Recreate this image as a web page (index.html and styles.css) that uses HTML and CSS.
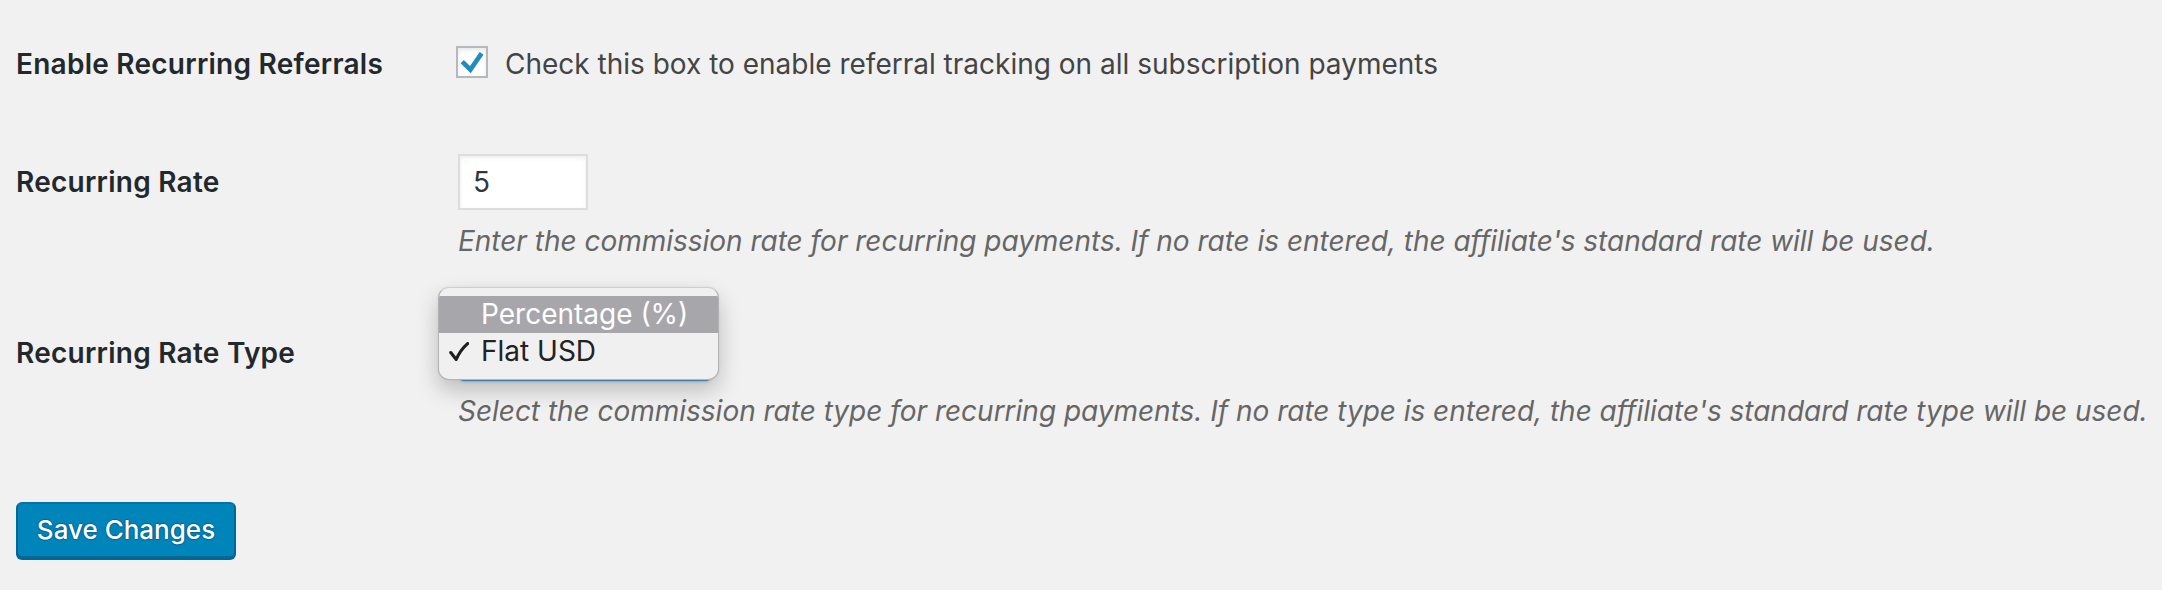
FILE: index.html
```html
<!DOCTYPE html>
<html lang="en">
<head>
<meta charset="utf-8">
<title>Recurring Referrals Settings</title>
<link rel="stylesheet" href="styles.css">
</head>
<body>
<form class="settings">
  <div class="row row-enable">
    <div class="th">Enable Recurring Referrals</div>
    <div class="td">
      <label class="check-label">
        <span class="checkbox">
          <svg class="tick-icon" viewBox="0 0 28 28" width="28" height="28" aria-hidden="true">
            <path d="M4.2 13.6 L12.4 21.6 L23.6 5.4" fill="none" stroke="#1e8cbe" stroke-width="4.6" stroke-linejoin="miter" stroke-linecap="butt"/>
          </svg>
        </span>
        <span class="check-text">Check this box to enable referral tracking on all subscription payments</span>
      </label>
    </div>
  </div>

  <div class="row row-rate">
    <div class="th">Recurring Rate</div>
    <div class="td">
      <div class="text-input">5</div>
      <p class="description">Enter the commission rate for recurring payments. If no rate is entered, the affiliate's standard rate will be used.</p>
    </div>
  </div>

  <div class="row row-type">
    <div class="th">Recurring Rate Type</div>
    <div class="td">
      <div class="select-wrap">
        <div class="select"></div>
        <div class="popup">
          <div class="option highlighted">Percentage (%)</div>
          <div class="option">
            <svg class="mark" viewBox="0 0 20 20" width="20" height="20" aria-hidden="true">
              <path d="M1.8 10.6 L7.2 17.4 C10 11 13.5 6 18.6 1.6" fill="none" stroke="#1f1f1f" stroke-width="3.2" stroke-linejoin="round" stroke-linecap="round"/>
            </svg>Flat USD
          </div>
        </div>
      </div>
      <p class="description">Select the commission rate type for recurring payments. If no rate type is entered, the affiliate's standard rate type will be used.</p>
    </div>
  </div>

  <div class="submit">
    <button type="button" class="button-primary">Save Changes</button>
  </div>
</form>
</body>
</html>
```

FILE: styles.css
```css
html, body {
  margin: 0;
  padding: 0;
  background: #f1f1f1;
}

body {
  font-family: "Inter", "Liberation Sans", sans-serif;
  color: #444;
  width: 2162px;
  height: 590px;
  overflow: hidden;
}

.settings {
  padding: 0 0 0 16px;
}

.row {
  display: grid;
  grid-template-columns: 440px 1fr;
  align-items: start;
}

.th {
  font-size: 28px;
  line-height: 36px;
  font-weight: 600;
  letter-spacing: 0.25px;
  color: #23282d;
}

.row-enable .th { padding-top: 46px; }
.row-enable .td { padding-top: 46px; padding-bottom: 42px; }

.row-rate .th { padding-top: 40px; }
.row-rate .td { padding-top: 30px; padding-bottom: 36px; }

.row-type .th { padding-top: 40px; }
.row-type .td { padding-top: 30px; padding-bottom: 30px; }

.check-label {
  display: flex;
  align-items: flex-start;
  gap: 17px;
}

.checkbox {
  box-sizing: border-box;
  width: 32px;
  height: 32px;
  border: 2px solid #b4b9be;
  background: #fff;
  box-shadow: inset 0 2px 4px rgba(0, 0, 0, 0.1);
  display: flex;
  flex: none;
}

.tick-icon {
  display: block;
}

.check-text {
  font-size: 28px;
  line-height: 36px;
  color: #444;
}

.text-input {
  box-sizing: border-box;
  width: 130px;
  height: 56px;
  margin-left: 2px;
  border: 2px solid #ddd;
  background: #fff;
  box-shadow: inset 0 2px 4px rgba(0, 0, 0, 0.07);
  font-size: 28px;
  line-height: 52px;
  padding-left: 13px;
  color: #32373c;
}

.description {
  margin: 13px 0 0 2px;
  font-size: 28px;
  line-height: 36px;
  font-style: italic;
  letter-spacing: -0.02px;
  white-space: nowrap;
  color: #666;
}

.row-type .description {
  margin-top: 12px;
}

.select-wrap {
  position: relative;
  width: 250px;
  height: 56px;
  margin-left: 4px;
}

.select {
  box-sizing: border-box;
  width: 250px;
  height: 56px;
  border: 2px solid #5b9dd9;
  border-radius: 4px;
  background: #fff;
  box-shadow: 0 0 3px rgba(30, 140, 190, 0.7);
}

.popup {
  position: absolute;
  left: -22px;
  top: -38px;
  box-sizing: border-box;
  width: 281px;
  height: 93px;
  padding-top: 8px;
  border: 1px solid #b3b3b3;
  border-top-color: #cfcfcf;
  border-radius: 11px;
  background: #f0f0f0;
  box-shadow: 0 10px 22px rgba(0, 0, 0, 0.22), 0 0 2px rgba(0, 0, 0, 0.08);
  overflow: hidden;
}

.option {
  height: 37px;
  line-height: 37px;
  font-size: 28px;
  color: #222;
  padding-left: 42px;
  position: relative;
}

.option.highlighted {
  background: #a7a6ab;
  color: #fff;
}

.mark {
  position: absolute;
  left: 10px;
  top: 9px;
  display: block;
}

.submit {
  padding-top: 43px;
}

.button-primary {
  box-sizing: border-box;
  height: 56px;
  width: 220px;
  padding: 0;
  margin: 0;
  white-space: nowrap;
  font-family: "Inter", "Liberation Sans", sans-serif;
  font-size: 26px;
  line-height: 52px;
  font-weight: 500;
  color: #fff;
  background: #0085ba;
  border: 2px solid;
  border-color: #0073aa #006799 #006799;
  border-radius: 6px;
  box-shadow: 0 2px 0 #006799;
  text-shadow: 0 -1px 1px #006799, 1px 0 1px #006799, 0 1px 1px #006799, -1px 0 1px #006799;
  cursor: pointer;
}
```
